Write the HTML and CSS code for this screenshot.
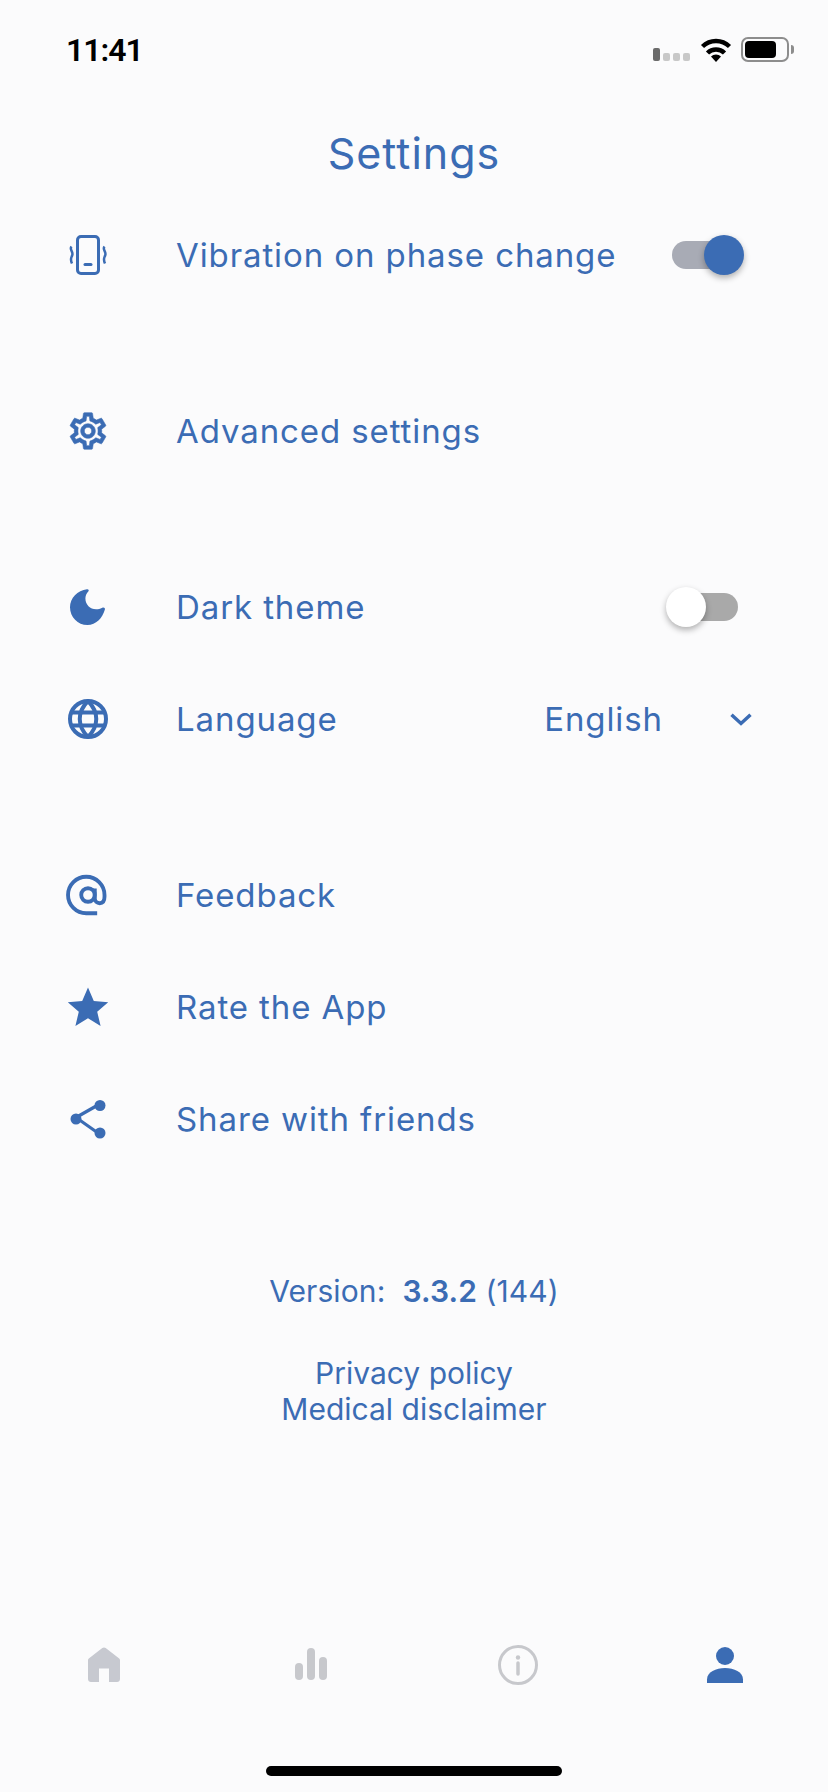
FILE: index.html
```html
<!DOCTYPE html>
<html lang="en">
<head>
<meta charset="utf-8">
<title>Settings</title>
<link rel="stylesheet" href="styles.css">
</head>
<body>
<div class="page">
  <header class="status">
    <span class="time">11:41</span>
    <div class="status-icons">
      <div class="signal"><i class="bar first"></i><i class="bar"></i><i class="bar"></i><i class="bar"></i></div>
      <svg class="wifi" width="32" height="25" viewBox="0 0 32 25"><path d="M16 25l-5-5.500a7 7 0 0 1 10 0z" fill="#000"/><path d="M7.500 16a12 12 0 0 1 17 0M2.500 9.500a19.500 19.500 0 0 1 27 0" fill="none" stroke="#000" stroke-width="4.500"/></svg>
      <div class="battery"><div class="battery-body"><div class="battery-fill"></div></div><div class="battery-tip"></div></div>
    </div>
  </header>

  <h1 class="title">Settings</h1>

  <main class="list">
    <section class="group">
      <div class="row">
        <svg class="icon" viewBox="0 0 44 44" fill="none" stroke="#3b6cb4" stroke-width="3"><rect x="11.500" y="3.500" width="21" height="37" rx="3.500"/><path d="M19 31.500h6" stroke-linecap="round"/><path d="M5.500 13.500c-2.500 3 2 5 .8 8.500s-2.500 4-.3 8.500M38.500 13.500c-2.500 3 2 5 .8 8.500s-2.500 4-.3 8.500" stroke-width="2.500"/></svg>
        <span class="label">Vibration on phase change</span>
        <div class="switch on"><div class="knob"></div></div>
      </div>
    </section>
    <section class="group">
      <div class="row">
        <svg class="icon gear" viewBox="0 0 24 24" fill="#3b6cb4"><path d="M19.430 12.980c.04-.32.070-.64.070-.98s-.03-.66-.07-.98l2.110-1.650c.19-.15.240-.42.120-.64l-2-3.460c-.12-.22-.39-.30-.61-.22l-2.490 1c-.52-.40-1.080-.73-1.690-.98l-.38-2.650C14.460 2.180 14.250 2 14 2h-4c-.25 0-.46.180-.49.420l-.38 2.650c-.61.250-1.170.590-1.690.980l-2.490-1c-.23-.090-.49 0-.61.220l-2 3.460c-.13.220-.07.490.12.640l2.110 1.650c-.04.320-.07.650-.07.980s.03.660.07.980l-2.110 1.650c-.19.150-.24.420-.12.640l2 3.460c.12.220.39.300.61.220l2.490-1c.52.400 1.080.730 1.690.980l.38 2.650c.03.240.24.420.49.420h4c.25 0 .46-.180.49-.420l.38-2.650c.61-.250 1.170-.590 1.690-.980l2.490 1c.23.090.49 0 .61-.220l2-3.460c.12-.22.070-.49-.12-.64l-2.110-1.650zM17.450 11.270c.04.310.05.520.05.730 0 .21-.02.430-.05.730l-.14 1.130.89.700 1.080.840-.7 1.210-1.270-.51-1.040-.420-.9.680c-.43.320-.84.560-1.250.730l-1.060.430-.16 1.130-.2 1.350h-1.400l-.19-1.350-.16-1.130-1.060-.430c-.43-.18-.83-.41-1.230-.71l-.91-.7-1.060.430-1.270.51-.7-1.210 1.080-.840.89-.7-.14-1.130c-.03-.31-.05-.54-.05-.74s.02-.43.050-.73l.14-1.130-.89-.7-1.080-.840.7-1.210 1.270.51 1.040.420.9-.68c.43-.32.84-.56 1.250-.73l1.060-.43.16-1.130.2-1.350h1.390l.19 1.350.16 1.130 1.060.43c.43.180.83.410 1.230.71l.91.7 1.060-.43 1.270-.51.7 1.210-1.070.850-.89.700.14 1.130zM12 8c-2.210 0-4 1.790-4 4s1.790 4 4 4 4-1.790 4-4-1.790-4-4-4zm0 6c-1.100 0-2-.9-2-2s.9-2 2-2 2 .9 2 2-.9 2-2 2z"/></svg>
        <span class="label">Advanced settings</span>
      </div>
    </section>
    <section class="group">
      <div class="row">
        <svg class="icon" viewBox="0 0 44 44" fill="#3b6cb4"><path d="M21 4.200c1.500-.3 2.300 1.200 1.300 2.300-1.900 2-2.900 4.500-2.900 7 0 6 4.700 10.800 10.700 10.800 2.200 0 3.900-.4 6.200-1.600 1.500-.8 3 .2 2.600 1.800C36.500 33 30 40 21.500 40 11.800 40 4 32 4 22.200 4 13 11.500 5.400 21 4.200z"/></svg>
        <span class="label">Dark theme</span>
        <div class="switch off"><div class="knob"></div></div>
      </div>
      <div class="row">
        <svg class="icon" viewBox="0 0 44 44" fill="none" stroke="#3b6cb4" stroke-width="4"><circle cx="22" cy="22" r="18"/><path d="M5 15.500h34M5 28.500h34"/><path d="M22 4c-11 11-11 25 0 36M22 4c11 11 11 25 0 36"/></svg>
        <span class="label grow">Language</span>
        <span class="value">English</span>
        <svg class="chevron" width="22" height="13" viewBox="0 0 22 13" fill="none" stroke="#3b6cb4" stroke-width="3.500"><path d="M1.500 1.800L11 10.500l9.500-8.700"/></svg>
      </div>
    </section>
    <section class="group">
      <div class="row">
        <svg class="icon" viewBox="0 0 24 24" fill="none" stroke="#3b6cb4" stroke-width="2.100"><circle cx="12" cy="12" r="3.700"/><path d="M15.700 8.500v5.300c0 1.700 1.200 2.700 2.700 2.700s2.600-1.100 2.600-3.500V12a9.950 9.950 0 1 0-9.950 9.950H17"/></svg>
        <span class="label">Feedback</span>
      </div>
      <div class="row">
        <svg class="icon" viewBox="0 0 44 44" fill="#3b6cb4"><path d="M22 2.500l5.800 13.600 14.400 1.200-11 9.500 3.400 14.200L22 33.300 9.400 40.900l3.400-14.200-11-9.500 14.400-1.200z"/></svg>
        <span class="label">Rate the App</span>
      </div>
      <div class="row">
        <svg class="icon" viewBox="0 0 44 44" fill="#3b6cb4" stroke="#3b6cb4"><path d="M32 8L10 20.500 32 36" fill="none" stroke-width="3.200"/><circle cx="34" cy="8.500" r="5.500" stroke="none"/><circle cx="10" cy="22" r="5.500" stroke="none"/><circle cx="34" cy="36" r="5.500" stroke="none"/></svg>
        <span class="label">Share with friends</span>
      </div>
    </section>
  </main>

  <footer class="about">
    <p class="version">Version:&nbsp; <b>3.3.2</b> (144)</p>
    <p class="links">Privacy policy<br>Medical disclaimer</p>
  </footer>

  <nav class="tabs">
    <svg class="tab" viewBox="0 0 40 40" fill="#c7c9d0"><path d="M20 2.500c.6 0 1.200.2 1.700.6l13.500 10.300c.5.400.8 1 .8 1.600V34c0 1.700-1.300 3-3 3H25V23.500H15V37H7c-1.700 0-3-1.300-3-3V15c0-.6.300-1.200.8-1.600L18.300 3.100c.5-.4 1.100-.6 1.700-.6z"/></svg>
    <svg class="tab" viewBox="0 0 40 40" fill="#c7c8cc"><rect x="4" y="18" width="8" height="17" rx="4"/><rect x="16" y="3" width="8" height="32" rx="4"/><rect x="28" y="12" width="8" height="23" rx="4"/></svg>
    <svg class="tab" viewBox="0 0 40 40" fill="none" stroke="#c7c8cc" stroke-width="3"><circle cx="20" cy="20" r="18.500"/><path d="M20 18v11" stroke-width="3.500" stroke-linecap="round"/><circle cx="20" cy="12.500" r="2.200" fill="#c7c8cc" stroke="none"/></svg>
    <svg class="tab" viewBox="0 0 40 40" fill="#3b6cb4"><circle cx="20" cy="11" r="9"/><path d="M2 38v-3.500C2 27 11 23 20 23s18 4 18 11.500V38z"/></svg>
  </nav>
  <div class="home-wrap"><div class="home"></div></div>
</div>
</body>
</html>
```
FILE: styles.css
```css
* { box-sizing: border-box; }
html, body { margin: 0; padding: 0; }
body { background: #fbfbfc; font-family: Inter, "Liberation Sans", sans-serif; color: #3b6cb4; }
.page { width: 828px; height: 1792px; display: flex; flex-direction: column; overflow: hidden; }

.status { height: 100px; padding: 36px 34px 0 66px; display: flex; justify-content: space-between; align-items: flex-start; }
.time { font-family: Roboto, sans-serif; font-weight: 600; font-size: 32px; line-height: 28px; color: #000; letter-spacing: -1px; }
.status-icons { display: flex; align-items: flex-end; gap: 9px; height: 26px; }
.signal { display: flex; align-items: flex-end; gap: 3px; margin-bottom: 1px; margin-right: 1px; }
.bar { display: block; width: 7px; height: 8px; background: #c8c8c8; border-radius: 2px; }
.bar.first { height: 13px; background: #6b6b6b; }
.battery { display: flex; align-items: center; gap: 2px; }
.battery-body { width: 48px; height: 25px; border: 2px solid #8d8d8d; border-radius: 7px; padding: 2px; }
.battery-fill { width: 31px; height: 100%; background: #000; border-radius: 4px; }
.battery-tip { width: 3px; height: 9px; background: #8d8d8d; border-radius: 0 3px 3px 0; }

.title { margin: 0; height: 99px; padding-top: 33px; text-align: center; font-weight: 400; font-size: 43px; line-height: 40px; letter-spacing: 1px; }

.group { margin-bottom: 64px; }
.row { height: 112px; padding: 0 66px; display: flex; align-items: center; }
.icon { width: 44px; height: 44px; margin-right: 66px; flex: none; }
.gear { stroke: #3b6cb4; stroke-width: .3; }
.label { font-size: 33px; line-height: 42px; letter-spacing: .9px; }
.grow { flex: 1; }
.value { font-size: 33px; line-height: 42px; letter-spacing: .9px; margin-right: 67px; }
.chevron { margin-right: 10px; flex: none; }

.switch { margin-left: auto; width: 66px; height: 28px; border-radius: 14px; position: relative; margin-right: 24px; }
.switch.on { background: #a8abb5; }
.switch.off { background: #a9a9a9; }
.knob { position: absolute; top: -6px; width: 40px; height: 40px; border-radius: 50%; box-shadow: 0 3px 6px rgba(0,0,0,.3); }
.on .knob { right: -6px; background: #3b6cb4; }
.off .knob { left: -6px; background: #fff; }

.about { text-align: center; font-size: 30px; line-height: 36px; margin-top: 34px; }
.about p { margin: 0; }
.version { margin-bottom: 46px !important; letter-spacing: .1px; }
.version b { font-weight: 600; }

.tabs { margin-top: auto; padding: 0 83px 0 84px; display: flex; justify-content: space-between; }
.tab { width: 40px; height: 40px; }
.home-wrap { height: 107px; padding-top: 81px; display: flex; justify-content: center; flex: none; }
.home { width: 296px; height: 10px; background: #000; border-radius: 5px; }
```
